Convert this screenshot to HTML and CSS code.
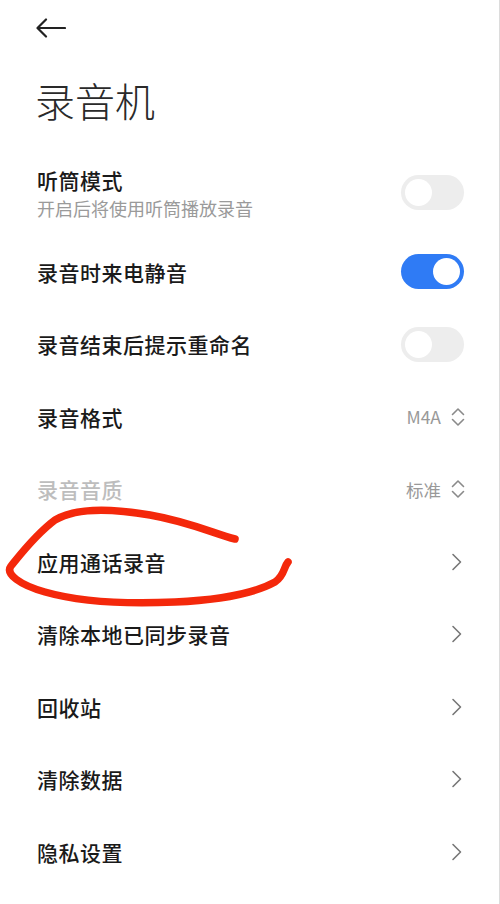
FILE: index.html
```html
<!DOCTYPE html>
<html lang="zh-CN">
<head>
  <meta charset="UTF-8">
  <title>录音机</title>
  <link rel="stylesheet" href="styles.css">
</head>
<body>
  <div class="page">
    <div class="top-bar">
      <svg class="back" width="30" height="20" viewBox="0 0 30 20">
        <path d="M29 10H2M10 1.5L1.5 10L10 18.5" fill="none" stroke="#222" stroke-width="2.2" stroke-linecap="round" stroke-linejoin="round"/>
      </svg>
    </div>
    <h1 class="title">录音机</h1>

    <div class="list">
      <div class="row row-tall">
        <div class="text">
          <div class="label">听筒模式</div>
          <div class="sub">开启后将使用听筒播放录音</div>
        </div>
        <div class="switch"><span class="knob"></span></div>
      </div>

      <div class="row">
        <div class="label">录音时来电静音</div>
        <div class="switch on"><span class="knob"></span></div>
      </div>

      <div class="row">
        <div class="label">录音结束后提示重命名</div>
        <div class="switch"><span class="knob"></span></div>
      </div>

      <div class="row">
        <div class="label">录音格式</div>
        <div class="value">M4A
          <svg class="updown" width="14" height="20" viewBox="0 0 14 20">
            <path d="M1.5 7.5L7 2L12.5 7.5M1.5 12.5L7 18L12.5 12.5" fill="none" stroke="#8a8a8a" stroke-width="1.6" stroke-linecap="round" stroke-linejoin="round"/>
          </svg>
        </div>
      </div>

      <div class="row">
        <div class="label disabled">录音音质</div>
        <div class="value">标准
          <svg class="updown" width="14" height="20" viewBox="0 0 14 20">
            <path d="M1.5 7.5L7 2L12.5 7.5M1.5 12.5L7 18L12.5 12.5" fill="none" stroke="#8a8a8a" stroke-width="1.6" stroke-linecap="round" stroke-linejoin="round"/>
          </svg>
        </div>
      </div>

      <div class="row">
        <div class="label">应用通话录音</div>
        <svg class="chev" width="12" height="18" viewBox="0 0 12 18"><path d="M2 1.5L9.5 9L2 16.5" fill="none" stroke="#777" stroke-width="1.6" stroke-linecap="round" stroke-linejoin="round"/></svg>
      </div>

      <div class="row">
        <div class="label">清除本地已同步录音</div>
        <svg class="chev" width="12" height="18" viewBox="0 0 12 18"><path d="M2 1.5L9.5 9L2 16.5" fill="none" stroke="#777" stroke-width="1.6" stroke-linecap="round" stroke-linejoin="round"/></svg>
      </div>

      <div class="row">
        <div class="label">回收站</div>
        <svg class="chev" width="12" height="18" viewBox="0 0 12 18"><path d="M2 1.5L9.5 9L2 16.5" fill="none" stroke="#777" stroke-width="1.6" stroke-linecap="round" stroke-linejoin="round"/></svg>
      </div>

      <div class="row">
        <div class="label">清除数据</div>
        <svg class="chev" width="12" height="18" viewBox="0 0 12 18"><path d="M2 1.5L9.5 9L2 16.5" fill="none" stroke="#777" stroke-width="1.6" stroke-linecap="round" stroke-linejoin="round"/></svg>
      </div>

      <div class="row">
        <div class="label">隐私设置</div>
        <svg class="chev" width="12" height="18" viewBox="0 0 12 18"><path d="M2 1.5L9.5 9L2 16.5" fill="none" stroke="#777" stroke-width="1.6" stroke-linecap="round" stroke-linejoin="round"/></svg>
      </div>
    </div>

    <!-- hand-drawn red mark over the page -->
    <svg class="scribble" width="500" height="904" viewBox="0 0 500 904">
      <path d="M235,539 C215,534 190,522 150,515 C110,508 75,508 55,520 C35,535 20,555 11,566 C5,574 20,585 45,592 C80,602 130,604 175,602 C220,600 255,593 275,582 C285,575 283,568 288,562" fill="none" stroke="#f4280b" stroke-width="7.5" stroke-linecap="round" stroke-linejoin="round"/>
    </svg>
  </div>
</body>
</html>
```

FILE: styles.css
```css
body {
  margin: 0;
  background: #fff;
  font-family: "Noto Sans CJK SC", "Noto Sans", sans-serif;
  color: #1a1a1a;
}

.page {
  position: relative;
  width: 499px;
  height: 904px;
  border-right: 1px solid #dcdcdc;
  overflow: hidden;
}

.top-bar {
  height: 56px;
  padding-left: 36px;
  display: flex;
  align-items: center;
}

.title {
  margin: 20px 0 26px 35px;
  font-size: 40px;
  line-height: 48px;
  font-weight: 300;
  color: #2a2a2a;
}

.list {
  padding: 0 34px 0 37px;
}

.row {
  height: 72.5px;
  display: flex;
  align-items: center;
  justify-content: space-between;
}

.row-tall {
  height: 85.5px;
}

.label {
  font-size: 21px;
  line-height: 30px;
  font-weight: 500;
  letter-spacing: 0.5px;
}

.label.disabled {
  color: #bdbdbd;
}

.sub {
  font-size: 18px;
  line-height: 26px;
  color: #9a9a9a;
}

.switch {
  width: 63px;
  height: 35px;
  border-radius: 18px;
  background: #ededed;
  position: relative;
  margin-right: 1px;
}

.switch .knob {
  position: absolute;
  top: 4px;
  left: 4px;
  width: 27px;
  height: 27px;
  border-radius: 50%;
  background: #fff;
}

.switch.on {
  background: #2f7bf5;
}

.switch.on .knob {
  left: auto;
  right: 4px;
}

.value {
  display: flex;
  align-items: center;
  gap: 10px;
  font-size: 17.5px;
  color: #999;
}

.chev {
  margin-right: 2px;
}

.scribble {
  position: absolute;
  left: 0;
  top: 0;
  pointer-events: none;
}
```
